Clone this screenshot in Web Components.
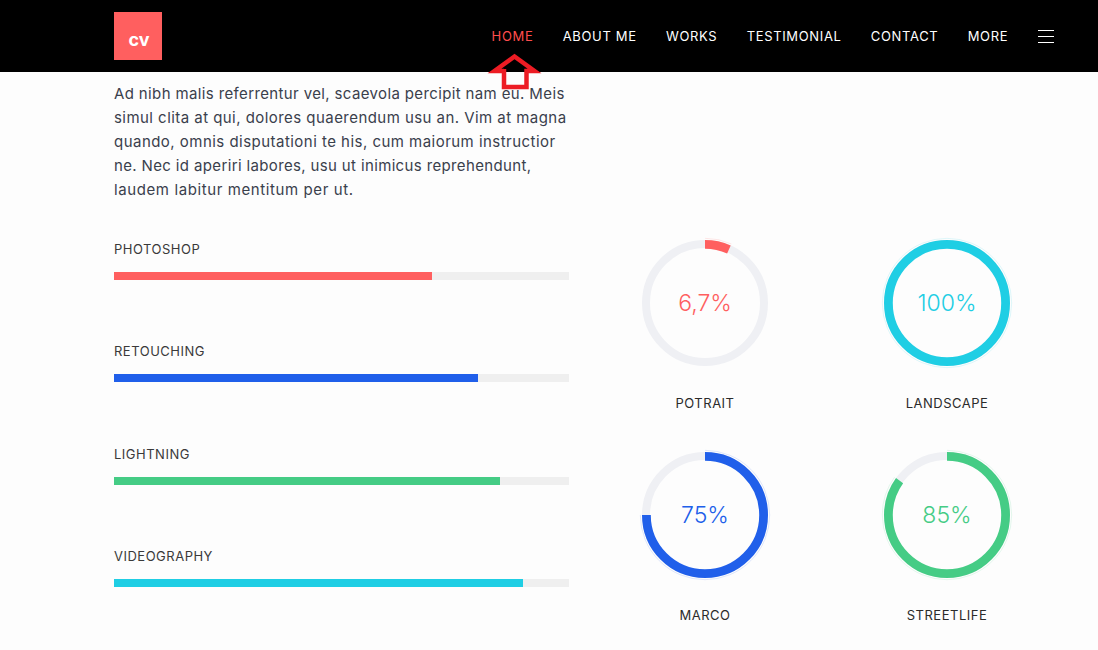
<!DOCTYPE html>
<html lang="en">
<head>
<meta charset="utf-8">
<title>CV</title>
<style>
    html, body {
        margin: 0;
        background: #fdfdfd;
        font-family: "Inter", "Liberation Sans", sans-serif;
    }
    /* per-line tracking, the lines are broken by hand */
    .l1 { letter-spacing: 0.37px; }
    .l2 { letter-spacing: 0.45px; }
    .l3 { letter-spacing: 0.47px; }
    .l4 { letter-spacing: 0.36px; }
    .l5 { letter-spacing: 0.6px; }
</style>
</head>
<body>
<site-header>
    <nav-link active>Home</nav-link>
    <nav-link>About me</nav-link>
    <nav-link>Works</nav-link>
    <nav-link>Testimonial</nav-link>
    <nav-link>Contact</nav-link>
    <nav-link>More</nav-link>
</site-header>
<skills-section>
    <span slot="intro"><span class="l1">Ad nibh malis referrentur vel, scaevola percipit nam eu. Meis</span><br><span class="l2">simul clita at qui, dolores quaerendum usu an. Vim at magna</span><br><span class="l3">quando, omnis disputationi te his, cum maiorum instructior</span><br><span class="l4">ne. Nec id aperiri labores, usu ut inimicus reprehendunt,</span><br><span class="l5">laudem labitur mentitum per ut.</span></span>
    <skill-bar slot="bars" value="69.9" color="#ff5f5f">Photoshop</skill-bar>
    <skill-bar slot="bars" value="80" color="#205fea">Retouching</skill-bar>
    <skill-bar slot="bars" value="84.85" color="#45cc85">Lightning</skill-bar>
    <skill-bar slot="bars" value="89.85" color="#1fcee4">Videography</skill-bar>
    <progress-ring slot="rings" value="6.7" text="6,7%" color="#ff5f5f">Potrait</progress-ring>
    <progress-ring slot="rings" value="100" text="100%" color="#1fcee4">Landscape</progress-ring>
    <progress-ring slot="rings" value="75" text="75%" color="#205fea">Marco</progress-ring>
    <progress-ring slot="rings" value="85" text="85%" color="#45cc85">Streetlife</progress-ring>
</skills-section>

<script>
class SiteHeader extends HTMLElement {
    constructor() {
        super();
        this.attachShadow({ mode: 'open' });
        this.shadowRoot.innerHTML = `
            <style>
                :host {
                    display: flex;
                    position: relative;
                    z-index: 2;
                    height: 72px;
                    align-items: center;
                    justify-content: space-between;
                    box-sizing: border-box;
                    padding: 0 44px 0 114px;
                    background: #000;
                }
                .logo {
                    display: flex;
                    width: 48px;
                    height: 48px;
                    align-items: center;
                    justify-content: center;
                    padding: 7px 0 0 2px;
                    box-sizing: border-box;
                    background: #ff5f5f;
                    color: #fff;
                    font-size: 18px;
                    font-weight: 700;
                }
                nav {
                    display: flex;
                    align-items: center;
                    gap: 29.35px;
                }
                .burger {
                    display: flex;
                    flex-direction: column;
                    gap: 5px;
                    width: 16px;
                    margin-left: 0.5px;
                }
                .burger i {
                    display: block;
                    height: 1px;
                    background: #fff;
                }
                .arrow {
                    position: absolute;
                    left: 487px;
                    top: 51px;
                }
            </style>
            <div class="logo">cv</div>
            <nav>
                <slot></slot>
                <div class="burger"><i></i><i></i><i></i></div>
            </nav>
            <svg class="arrow" width="58" height="40" viewBox="0 0 58 40">
                <polyline fill="none" stroke="#ed1c24" stroke-width="4.5" stroke-linejoin="miter"
                    points="17,20 7.5,20 27.5,5.5 47.5,20 39.5,20 39.5,36 17,36 17,18"/>
            </svg>
        `;
    }
}

class NavLink extends HTMLElement {
    constructor() {
        super();
        this.attachShadow({ mode: 'open' });
        this.shadowRoot.innerHTML = `
            <style>
                :host {
                    display: block;
                    color: #fff;
                    font-size: 13px;
                    font-weight: 400;
                    line-height: 20px;
                    letter-spacing: 0.65px;
                    text-transform: uppercase;
                }
                :host([active]) {
                    color: #ff4d4d;
                }
            </style>
            <slot></slot>
        `;
    }
}

class SkillsSection extends HTMLElement {
    constructor() {
        super();
        this.attachShadow({ mode: 'open' });
        this.shadowRoot.innerHTML = `
            <style>
                :host {
                    display: grid;
                    grid-template-columns: 455px 484px;
                    column-gap: 15px;
                    padding: 10px 0 0 114px;
                }
                .intro {
                    grid-column: 1 / 3;
                    margin-bottom: 37px;
                    color: #3a404c;
                    font-size: 15px;
                    line-height: 24px;
                }
                .bars {
                    display: flex;
                    flex-direction: column;
                    gap: 61.3px;
                }
                .rings {
                    display: grid;
                    grid-template-columns: 242px 242px;
                    row-gap: 38.7px;
                    align-content: start;
                }
            </style>
            <div class="intro"><slot name="intro"></slot></div>
            <div class="bars"><slot name="bars"></slot></div>
            <div class="rings"><slot name="rings"></slot></div>
        `;
    }
}

class SkillBar extends HTMLElement {
    constructor() {
        super();
        this.attachShadow({ mode: 'open' });
        const value = this.getAttribute('value');
        const color = this.getAttribute('color');
        this.shadowRoot.innerHTML = `
            <style>
                :host {
                    display: block;
                }
                .label {
                    margin-bottom: 13px;
                    color: #3a3a3a;
                    font-size: 13px;
                    line-height: 20px;
                    letter-spacing: 0.5px;
                    text-transform: uppercase;
                }
                .track {
                    height: 8px;
                    background: #efefef;
                }
                .fill {
                    width: ${value}%;
                    height: 100%;
                    background: ${color};
                }
            </style>
            <div class="label"><slot></slot></div>
            <div class="track"><div class="fill"></div></div>
        `;
    }
}

class ProgressRing extends HTMLElement {
    constructor() {
        super();
        this.attachShadow({ mode: 'open' });
        const value = Number(this.getAttribute('value'));
        const color = this.getAttribute('color');
        const text = this.getAttribute('text');
        // pathLength=100 lets the dash pattern be written in percent
        const arc = `pathLength="100" stroke-dasharray="${value} ${100 - value}"`;
        this.shadowRoot.innerHTML = `
            <style>
                :host {
                    display: flex;
                    flex-direction: column;
                    align-items: center;
                }
                .dial {
                    display: grid;
                    width: 128px;
                    height: 128px;
                    place-items: center;
                }
                .dial > * {
                    grid-area: 1 / 1;
                }
                svg {
                    display: block;
                    overflow: visible;
                }
                .percent {
                    color: ${color};
                    font-size: 23px;
                    font-weight: 300;
                }
                .label {
                    margin-top: 25.5px;
                    color: #2b2b2b;
                    font-size: 13px;
                    line-height: 20px;
                    letter-spacing: 0.5px;
                    text-transform: uppercase;
                }
            </style>
            <div class="dial">
                <svg width="128" height="128" viewBox="0 0 128 128">
                    <circle cx="64" cy="64" r="59" fill="none" stroke="#eff0f4" stroke-width="8"/>
                    <g transform="rotate(-90 64 64)" fill="none" stroke="${color}">
                        <circle cx="64" cy="64" r="64.7" stroke-width="0.8" opacity="0.18" ${arc}/>
                        <circle cx="64" cy="64" r="58.6" stroke-width="8.8" ${arc}/>
                    </g>
                </svg>
                <div class="percent">${text}</div>
            </div>
            <div class="label"><slot></slot></div>
        `;
    }
}

customElements.define('site-header', SiteHeader);
customElements.define('nav-link', NavLink);
customElements.define('skills-section', SkillsSection);
customElements.define('skill-bar', SkillBar);
customElements.define('progress-ring', ProgressRing);
</script>
</body>
</html>
